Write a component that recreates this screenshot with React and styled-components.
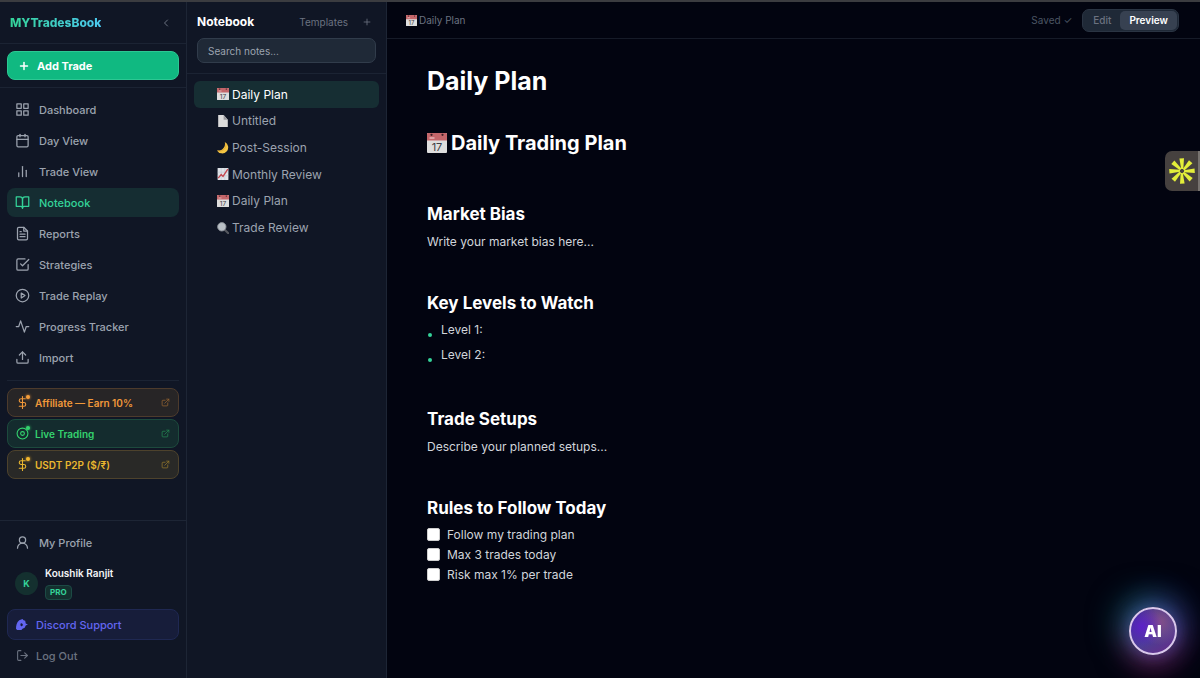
import React, { useState } from "react";
import styled, { createGlobalStyle } from "styled-components";
import {
  FiActivity,
  FiBarChart2,
  FiBookOpen,
  FiCalendar,
  FiCheckSquare,
  FiChevronLeft,
  FiDollarSign,
  FiExternalLink,
  FiFileText,
  FiGrid,
  FiLogOut,
  FiPlayCircle,
  FiPlus,
  FiUpload,
} from "react-icons/fi";
import { LuUserRound } from "react-icons/lu";

const GlobalStyle = createGlobalStyle`
  * {
    box-sizing: border-box;
  }

  body {
    margin: 0;
    background-color: #020410;
    color: #e5e7eb;
    font-family: Inter, "DejaVu Sans", sans-serif;
    font-size: 12px;
  }

  button, input {
    font-family: inherit;
  }

  button {
    cursor: pointer;
  }
`;

const Page = styled.div`
  display: flex;
  min-height: 100vh;
  border-top: 2px solid #3b3c40;
`;

const Sidebar = styled.aside`
  display: flex;
  flex-direction: column;
  flex: none;
  width: 187px;
  background-color: #101625;
  border-right: 1px solid #1d2535;
`;

const BrandRow = styled.div`
  display: flex;
  align-items: center;
  justify-content: space-between;
  height: 42px;
  padding: 0 14px 0 10px;
  border-bottom: 1px solid #1b2333;
`;

const Brand = styled.a`
  font-size: 12px;
  font-weight: 800;
  text-decoration: none;
  color: transparent;
  background: linear-gradient(90deg, #34d399, #4cc9f0);
  background-clip: text;
`;

const IconButton = styled.button`
  display: flex;
  padding: 0;
  border: none;
  background: none;
  color: #6b7280;
`;

const AddSection = styled.div`
  padding: 7px;
  border-bottom: 1px solid #1b2333;
`;

const AddButton = styled.button`
  display: flex;
  align-items: center;
  gap: 7px;
  width: 100%;
  height: 29px;
  padding: 0 10px;
  border: 1px solid #2cc893;
  border-radius: 8px;
  background-color: #10b981;
  color: white;
  font-size: 11px;
  font-weight: 700;
`;

const Nav = styled.nav`
  display: flex;
  flex-direction: column;
  gap: 2px;
  padding: 7px 7px 8px;
`;

const NavLink = styled.a`
  display: flex;
  align-items: center;
  gap: 9px;
  height: 29px;
  padding: 0 8px;
  border-radius: 8px;
  font-size: 11px;
  font-weight: 500;
  text-decoration: none;
  color: ${(props) => (props.$active ? "#34d399" : "#9ca3af")};
  background-color: ${(props) => (props.$active ? "#152d32" : "transparent")};
`;

const PromoList = styled.div`
  display: flex;
  flex-direction: column;
  gap: 2px;
  margin: 0 7px;
  padding-top: 7px;
  border-top: 1px solid #1b2333;
`;

const Promo = styled.a`
  display: flex;
  align-items: center;
  gap: 6px;
  height: 29px;
  padding: 0 8px;
  border: 1px solid ${(props) => props.$border};
  border-radius: 8px;
  background-color: ${(props) => props.$bg};
  color: ${(props) => props.$color};
  font-size: 10px;
  font-weight: 600;
  text-decoration: none;

  > svg {
    margin-left: auto;
    opacity: 0.55;
  }
`;

const PromoIcon = styled.span`
  position: relative;
  display: flex;

  &::after {
    content: "";
    position: absolute;
    top: -1px;
    right: -1px;
    width: 4px;
    height: 4px;
    border-radius: 50%;
    background-color: ${(props) => props.$dot};
    box-shadow: 0 0 3px ${(props) => props.$dot};
  }
`;

const SidebarFooter = styled.div`
  display: flex;
  flex-direction: column;
  margin-top: auto;
  padding: 7px;
  border-top: 1px solid #1d2535;
`;

const User = styled.div`
  display: flex;
  align-items: center;
  gap: 7px;
  height: 52px;
  padding: 0 8px;
`;

const Avatar = styled.span`
  display: flex;
  align-items: center;
  justify-content: center;
  width: 23px;
  height: 23px;
  border-radius: 50%;
  background-color: #14302f;
  color: #34d399;
  font-size: 9px;
  font-weight: 700;
`;

const UserName = styled.div`
  color: #f3f4f6;
  font-size: 10px;
  font-weight: 600;
  line-height: 13px;
`;

const Badge = styled.span`
  display: block;
  width: fit-content;
  margin-top: 5px;
  padding: 0 4px;
  border: 1px solid #1c4a45;
  border-radius: 4px;
  background-color: #14302f;
  color: #34d399;
  font-size: 8px;
  font-weight: 700;
  line-height: 13px;
`;

const FooterLink = styled.a`
  display: flex;
  align-items: center;
  gap: 7px;
  height: 31px;
  padding: 0 8px;
  border: 1px solid ${(props) => (props.$highlight ? "#1f2852" : "transparent")};
  border-radius: 8px;
  background-color: ${(props) => (props.$highlight ? "#171d3a" : "transparent")};
  color: ${(props) => (props.$highlight ? "#6366f1" : "#6b7280")};
  font-size: 11px;
  font-weight: 500;
  text-decoration: none;
`;

const NotesPanel = styled.section`
  flex: none;
  width: 200px;
  background-color: #101625;
  border-right: 1px solid #1d2535;
`;

const NotesHeader = styled.div`
  padding: 10px;
  border-bottom: 1px solid #1b2333;
`;

const NotesTitleRow = styled.div`
  display: flex;
  align-items: center;
  height: 19px;
  margin-bottom: 7px;
  padding-right: 4px;
`;

const NotesTitle = styled.h2`
  flex: 1;
  margin: 0;
  color: white;
  font-size: 12px;
  font-weight: 700;
`;

const TemplatesButton = styled.button`
  margin-right: 14px;
  padding: 0;
  border: none;
  background: none;
  color: #6b7280;
  font-size: 10px;
`;

const SearchInput = styled.input`
  display: block;
  width: 100%;
  height: 25px;
  padding: 0 10px;
  border: 1px solid #313c4b;
  border-radius: 7px;
  background-color: #1f2937;
  color: #e5e7eb;
  font-size: 10px;

  &::placeholder {
    color: #9ca3af;
  }
`;

const NoteList = styled.ul`
  display: grid;
  grid-auto-rows: 1fr;
  height: 174px;
  margin: 0;
  padding: 7px;
  list-style: none;
`;

const NoteButton = styled.button`
  display: flex;
  align-items: center;
  gap: 3px;
  width: 100%;
  height: 100%;
  padding: 0 23px;
  border: none;
  border-radius: 6px;
  background-color: ${(props) => (props.$active ? "#162e33" : "transparent")};
  color: ${(props) => (props.$active ? "#ffffff" : "#9ca3af")};
  font-size: 12px;
`;

const Main = styled.main`
  flex: 1;
  min-width: 0;
`;

const Toolbar = styled.div`
  display: flex;
  align-items: center;
  height: 37px;
  padding: 0 21px 0 19px;
  border-bottom: 1px solid #161b28;
  color: #6b7280;
  font-size: 10px;
`;

const Crumb = styled.div`
  display: flex;
  flex: 1;
  align-items: center;
  gap: 2px;
`;

const Saved = styled.span`
  margin-right: 10px;
  color: #4b5563;
`;

const Segmented = styled.div`
  display: flex;
  height: 23px;
  padding: 1px;
  border: 1px solid #2a3443;
  border-radius: 7px;
  background-color: #1f2937;
`;

const SegmentButton = styled.button`
  padding: 0 9px;
  border: none;
  border-radius: 5px;
  background-color: ${(props) => (props.$active ? "#374151" : "transparent")};
  color: ${(props) => (props.$active ? "#ffffff" : "#6b7280")};
  font-size: 10px;
  font-weight: ${(props) => (props.$active ? 600 : 500)};
`;

const Article = styled.article`
  padding: 26px 40px;
  color: #d1d5db;
  font-size: 12px;
`;

const Title = styled.h1`
  margin: 0 0 28px;
  color: white;
  font-size: 25px;
  font-weight: 700;
  line-height: 32px;
`;

const DocHeading = styled.h2`
  display: flex;
  align-items: center;
  gap: 4px;
  margin: 0 0 41px;
  color: white;
  font-size: 20px;
  font-weight: 700;
  line-height: 36px;
`;

const DocSection = styled.section`
  margin-bottom: 40px;
`;

const SectionHeading = styled.h3`
  margin: 0;
  color: white;
  font-size: 17px;
  font-weight: 700;
  line-height: 24px;
`;

const Paragraph = styled.p`
  margin: 6px 0 0;
  line-height: 19px;
`;

const BulletList = styled.ul`
  margin: 2px 0 0;
  padding: 0;
  list-style: none;
`;

const Bullet = styled.li`
  display: flex;
  align-items: center;
  gap: 8px;
  height: 25px;

  &::before {
    content: "";
    width: 4px;
    height: 4px;
    margin: 10px 1px 0;
    border-radius: 50%;
    background-color: #34d399;
  }
`;

const CheckList = styled.div`
  margin-top: 4px;
`;

const CheckRow = styled.label`
  display: flex;
  align-items: center;
  gap: 7px;
  height: 20px;
`;

const Checkbox = styled.input`
  appearance: none;
  width: 13px;
  height: 13px;
  margin: 0;
  border: 1px solid #cfcfcf;
  border-radius: 2px;
  background-color: white;

  &:checked {
    background-color: #34d399;
  }
`;

const SideTab = styled.button`
  position: fixed;
  top: 151px;
  right: 0;
  display: flex;
  align-items: center;
  justify-content: center;
  width: 35px;
  height: 40px;
  padding: 0;
  border: none;
  border-right: 2px solid #77736f;
  border-radius: 7px 0 0 7px;
  background-color: #46413f;
`;

const AiButton = styled.button`
  position: fixed;
  right: 23px;
  bottom: 23px;
  width: 48px;
  height: 48px;
  padding: 0;
  border: 2px solid #d9c8ec;
  border-radius: 50%;
  background: radial-gradient(circle at 25% 40%, #5c20c8, transparent 50%),
    radial-gradient(circle at 65% 30%, #855088, transparent 55%),
    linear-gradient(150deg, #3a3186, #4b3f94 60%, #6a2a88);
  box-shadow: -8px -8px 30px 4px rgba(20, 120, 130, 0.55),
    8px -8px 30px 4px rgba(50, 60, 150, 0.55), 0 10px 30px 4px rgba(150, 30, 100, 0.6),
    0 0 12px 2px rgba(90, 45, 140, 0.7);
  color: white;
  font-size: 16px;
  font-weight: 900;
`;

const CalendarEmoji = ({ size }) => (
  <svg width={size} height={size} viewBox="0 0 20 20" aria-hidden="true">
    <rect width="20" height="20" rx="1" fill="#dedede" />
    <path d="M1 0h18a1 1 0 0 1 1 1v6.500H0V1a1 1 0 0 1 1-1z" fill="#c4666a" />
    <circle cx="4.500" cy="1.800" r="1.100" fill="#3b1d22" />
    <circle cx="15.500" cy="1.800" r="1.100" fill="#3b1d22" />
    <path d="M2.500 5h5" stroke="#e6b7b9" strokeWidth="1.500" />
    <text x="10" y="17.500" textAnchor="middle" fontSize="11" fontWeight="400" fill="#3f3f46">
      17
    </text>
  </svg>
);

const PageEmoji = ({ size }) => (
  <svg width={size} height={size} viewBox="0 0 20 20" aria-hidden="true">
    <path d="M2 0h9l7 8v12H2z" fill="#dcdcdc" />
    <path d="M11 0v8h7z" fill="#9b9b9f" />
  </svg>
);

const MoonEmoji = ({ size }) => (
  <svg width={size} height={size} viewBox="0 0 20 20" aria-hidden="true">
    <path d="M13 0a10 10 0 1 1-13 14C8 16 15 9 13 0z" fill="#f5c643" />
    <path d="M1 14.500C9 17.500 16.500 10 14.500 2" fill="none" stroke="#d99a2b" strokeWidth="1" />
  </svg>
);

const ChartEmoji = ({ size }) => (
  <svg width={size} height={size} viewBox="0 0 20 20" aria-hidden="true">
    <rect x="1" width="18" height="20" rx="1" fill="#dfe3e8" />
    <path d="M1 7h18M1 13h18M7 0v20M13 0v20" stroke="#b9c2cc" strokeWidth="0.800" />
    <path d="M2 17l5-6 3 3 8-12" fill="none" stroke="#c4454d" strokeWidth="2.200" />
  </svg>
);

const SearchEmoji = ({ size }) => (
  <svg width={size} height={size} viewBox="0 0 20 20" aria-hidden="true">
    <path d="M12 12l7 7" stroke="#55585f" strokeWidth="3.500" strokeLinecap="round" />
    <circle cx="8" cy="8" r="7" fill="#b9c0c6" stroke="#8a8f96" strokeWidth="1.500" />
  </svg>
);

const LiveIcon = () => (
  <svg width="13" height="13" viewBox="0 0 24 24" fill="none" stroke="currentColor" strokeWidth="2">
    <circle cx="12" cy="12" r="10" />
    <circle cx="12" cy="12" r="3.500" />
  </svg>
);

const DiscordIcon = () => (
  <svg width="13" height="13" viewBox="0 0 24 24" fill="currentColor">
    <path
      fillRule="evenodd"
      d="M6 4l6-2 2 2 3 1 1 5 4 2-4 2-2 4-4 2-2 2H2l-2-2C0 14 1 8 6 4zm5 6a2.200 2.600 0 1 0 0 5 2.200 2.600 0 0 0 0-5z"
    />
  </svg>
);

const BurstIcon = () => (
  <svg width="26" height="26" viewBox="-13 -13 26 26" fill="#e3ee3a">
    {[0, 45, 90, 135, 180, 225, 270, 315].map((angle) => (
      <path key={angle} d="M-2.600-12.500L2-12.800 1.300-2-.8-2z" transform={`rotate(${angle})`} />
    ))}
  </svg>
);

const navItems = [
  { label: "Dashboard", Icon: FiGrid },
  { label: "Day View", Icon: FiCalendar },
  { label: "Trade View", Icon: FiBarChart2 },
  { label: "Notebook", Icon: FiBookOpen },
  { label: "Reports", Icon: FiFileText },
  { label: "Strategies", Icon: FiCheckSquare },
  { label: "Trade Replay", Icon: FiPlayCircle },
  { label: "Progress Tracker", Icon: FiActivity },
  { label: "Import", Icon: FiUpload },
];

const notes = [
  { id: 1, title: "Daily Plan", Emoji: CalendarEmoji },
  { id: 2, title: "Untitled", Emoji: PageEmoji },
  { id: 3, title: "Post-Session", Emoji: MoonEmoji },
  { id: 4, title: "Monthly Review", Emoji: ChartEmoji },
  { id: 5, title: "Daily Plan", Emoji: CalendarEmoji },
  { id: 6, title: "Trade Review", Emoji: SearchEmoji },
];

const rules = ["Follow my trading plan", "Max 3 trades today", "Risk max 1% per trade"];

export default function App() {
  const [activeNote, setActiveNote] = useState(1);
  const [mode, setMode] = useState("Preview");

  return (
    <>
      <GlobalStyle />
      <Page>
        <Sidebar>
          <BrandRow>
            <Brand href="#">MYTradesBook</Brand>
            <IconButton aria-label="Collapse sidebar">
              <FiChevronLeft size={12} />
            </IconButton>
          </BrandRow>
          <AddSection>
            <AddButton>
              <FiPlus size={12} strokeWidth={3} />
              Add Trade
            </AddButton>
          </AddSection>
          <Nav>
            {navItems.map(({ label, Icon }) => (
              <NavLink key={label} href="#" $active={label === "Notebook"}>
                <Icon size={15} />
                {label}
              </NavLink>
            ))}
          </Nav>
          <PromoList>
            <Promo href="#" $color="#f0983a" $bg="#272526" $border="#4d3b2c">
              <PromoIcon $dot="#f59e3b">
                <FiDollarSign size={13} />
              </PromoIcon>
              Affiliate — Earn 10%
              <FiExternalLink size={9} />
            </Promo>
            <Promo href="#" $color="#34d36f" $bg="#142c2e" $border="#1d4a3d">
              <PromoIcon $dot="#34d36f">
                <LiveIcon />
              </PromoIcon>
              Live Trading
              <FiExternalLink size={9} />
            </Promo>
            <Promo href="#" $color="#eab72f" $bg="#292927" $border="#4d422c">
              <PromoIcon $dot="#f5b82e">
                <FiDollarSign size={13} />
              </PromoIcon>
              USDT P2P ($/₹)
              <FiExternalLink size={9} />
            </Promo>
          </PromoList>
          <SidebarFooter>
            <NavLink href="#">
              <LuUserRound size={15} />
              My Profile
            </NavLink>
            <User>
              <Avatar>K</Avatar>
              <div>
                <UserName>Koushik Ranjit</UserName>
                <Badge>PRO</Badge>
              </div>
            </User>
            <FooterLink href="#" $highlight>
              <DiscordIcon />
              Discord Support
            </FooterLink>
            <FooterLink href="#">
              <FiLogOut size={13} />
              Log Out
            </FooterLink>
          </SidebarFooter>
        </Sidebar>

        <NotesPanel>
          <NotesHeader>
            <NotesTitleRow>
              <NotesTitle>Notebook</NotesTitle>
              <TemplatesButton>Templates</TemplatesButton>
              <IconButton aria-label="New note">
                <FiPlus size={10} />
              </IconButton>
            </NotesTitleRow>
            <SearchInput type="text" placeholder="Search notes..." aria-label="Search notes" />
          </NotesHeader>
          <NoteList>
            {notes.map(({ id, title, Emoji }) => (
              <li key={id}>
                <NoteButton $active={id === activeNote} onClick={() => setActiveNote(id)}>
                  <Emoji size={12} />
                  {title}
                </NoteButton>
              </li>
            ))}
          </NoteList>
        </NotesPanel>

        <Main>
          <Toolbar>
            <Crumb>
              <CalendarEmoji size={11} />
              Daily Plan
            </Crumb>
            <Saved>Saved ✓</Saved>
            <Segmented>
              {["Edit", "Preview"].map((name) => (
                <SegmentButton key={name} $active={name === mode} onClick={() => setMode(name)}>
                  {name}
                </SegmentButton>
              ))}
            </Segmented>
          </Toolbar>
          <Article>
            <Title>Daily Plan</Title>
            <DocHeading>
              <CalendarEmoji size={20} />
              Daily Trading Plan
            </DocHeading>
            <DocSection>
              <SectionHeading>Market Bias</SectionHeading>
              <Paragraph>Write your market bias here...</Paragraph>
            </DocSection>
            <DocSection>
              <SectionHeading>Key Levels to Watch</SectionHeading>
              <BulletList>
                <Bullet>Level 1:</Bullet>
                <Bullet>Level 2:</Bullet>
              </BulletList>
            </DocSection>
            <DocSection>
              <SectionHeading>Trade Setups</SectionHeading>
              <Paragraph>Describe your planned setups...</Paragraph>
            </DocSection>
            <DocSection>
              <SectionHeading>Rules to Follow Today</SectionHeading>
              <CheckList>
                {rules.map((rule) => (
                  <CheckRow key={rule}>
                    <Checkbox type="checkbox" />
                    {rule}
                  </CheckRow>
                ))}
              </CheckList>
            </DocSection>
          </Article>
        </Main>
      </Page>
      <SideTab aria-label="Open extension">
        <BurstIcon />
      </SideTab>
      <AiButton>AI</AiButton>
    </>
  );
}
